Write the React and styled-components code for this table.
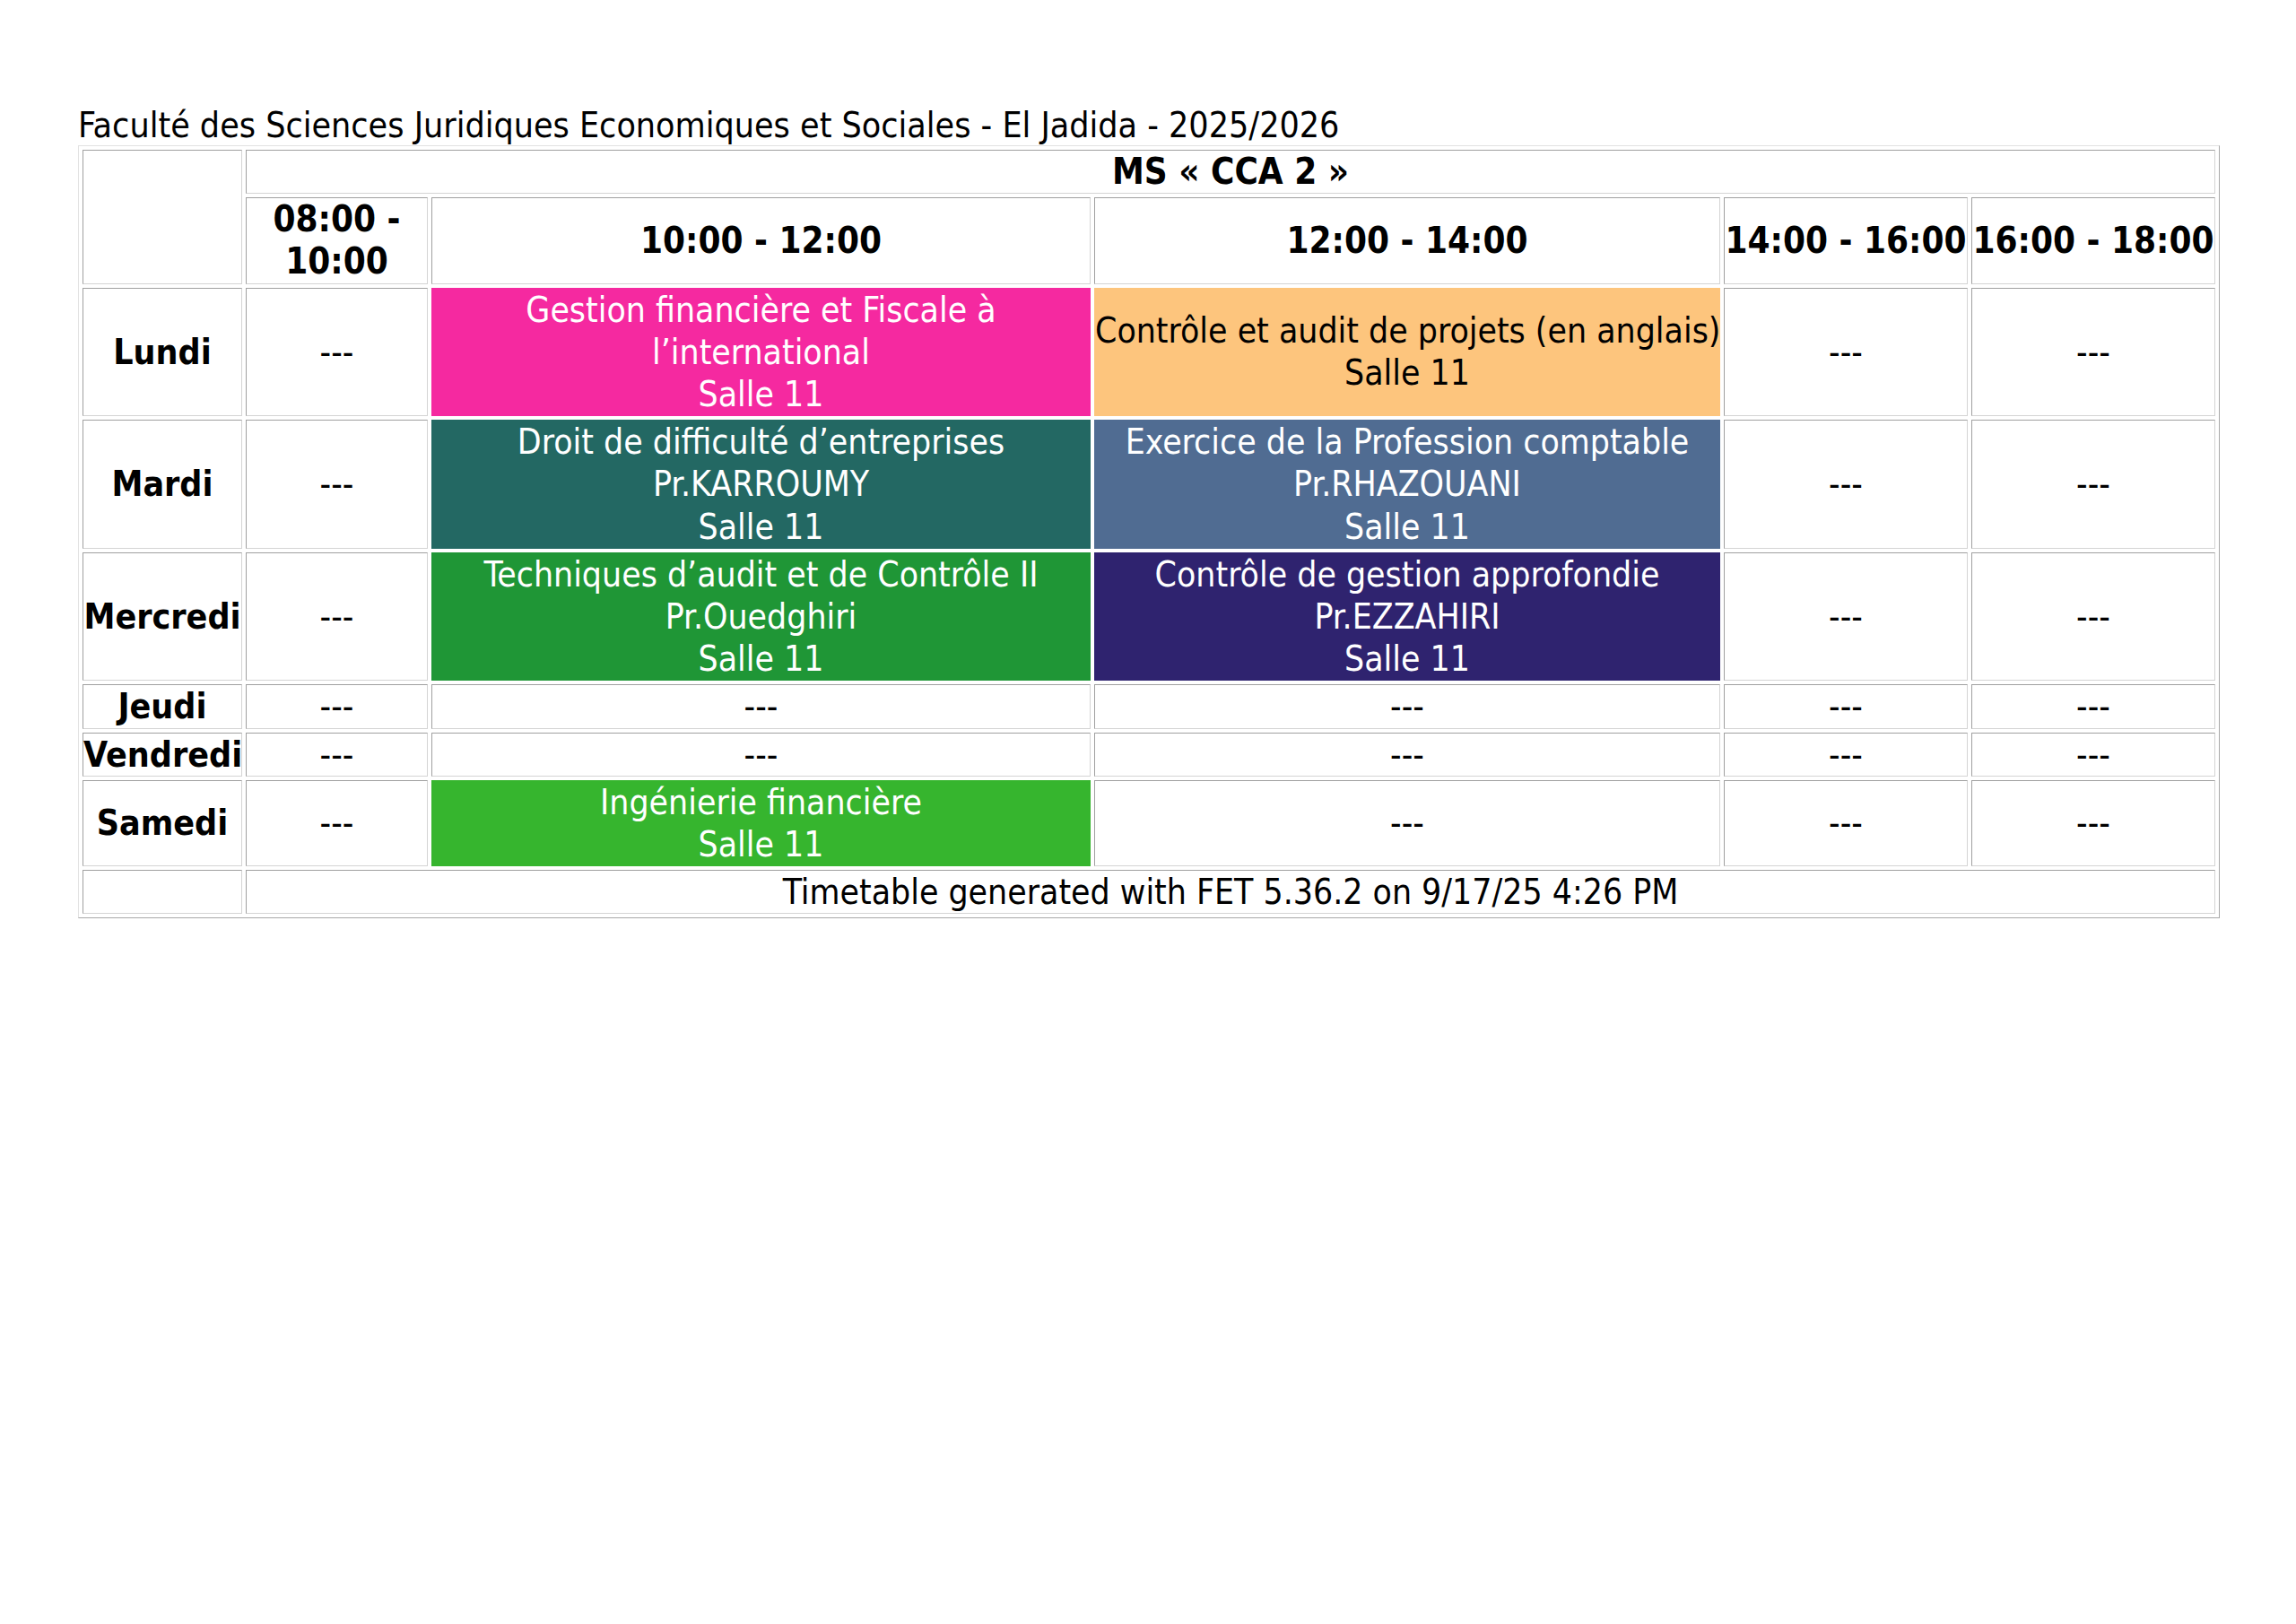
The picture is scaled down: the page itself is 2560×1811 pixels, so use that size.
import React from 'react';
import styled, { createGlobalStyle } from 'styled-components';

const GlobalStyle = createGlobalStyle`
  html, body {
    margin: 0;
    padding: 0;
    background: #ffffff;
  }
  body {
    font-family: "DejaVu Sans Condensed", "DejaVu Sans", sans-serif;
    font-stretch: condensed;
    color: #000;
  }
`;

const COLS = [178, 203, 735, 698, 272, 272];

const SALLE = 'Salle 11';

const days = [
  {
    name: 'Lundi',
    slots: [
      null,
      { bg: '#f529a0', fg: '#ffffff', lines: ['Gestion financière et Fiscale à l’international', SALLE] },
      { bg: '#fdc57d', fg: '#000000', lines: ['Contrôle et audit de projets (en anglais)', SALLE], nowrap: true },
      null,
      null,
    ],
  },
  {
    name: 'Mardi',
    slots: [
      null,
      { bg: '#236863', fg: '#ffffff', lines: ['Droit de difficulté d’entreprises', 'Pr.KARROUMY', SALLE] },
      { bg: '#506c92', fg: '#ffffff', lines: ['Exercice de la Profession comptable', 'Pr.RHAZOUANI', SALLE] },
      null,
      null,
    ],
  },
  {
    name: 'Mercredi',
    slots: [
      null,
      { bg: '#1f9636', fg: '#ffffff', lines: ['Techniques d’audit et de Contrôle II', 'Pr.Ouedghiri', SALLE] },
      { bg: '#2f236f', fg: '#ffffff', lines: ['Contrôle de gestion approfondie', 'Pr.EZZAHIRI', SALLE] },
      null,
      null,
    ],
  },
  { name: 'Jeudi', slots: [null, null, null, null, null] },
  { name: 'Vendredi', slots: [null, null, null, null, null] },
  {
    name: 'Samedi',
    slots: [
      null,
      { bg: '#36b52e', fg: '#ffffff', lines: ['Ingénierie financière', SALLE] },
      null,
      null,
      null,
    ],
  },
];

// the first slot wraps onto two lines, the narrow last two must not
const hours = [
  { label: '08:00 - 10:00', nowrap: false },
  { label: '10:00 - 12:00', nowrap: true },
  { label: '12:00 - 14:00', nowrap: true },
  { label: '14:00 - 16:00', nowrap: true },
  { label: '16:00 - 18:00', nowrap: true },
];

const Page = styled.main`
  padding: 118px 0 0 87px;
  min-height: 1811px;
  box-sizing: border-box;
`;

const Timetable = styled.table`
  width: 2388px;
  table-layout: fixed;
  border-collapse: separate;
  border-spacing: 4px;
  border: 1px solid;
  border-color: #e2e2e2 #a8a8a8 #a8a8a8 #e2e2e2;
  font-size: 38.8px;
  line-height: 47.2px;
`;

const Caption = styled.caption`
  caption-side: top;
  text-align: left;
  font-size: 39px;
  line-height: 44px;
  font-weight: normal;
  white-space: nowrap;
`;

const Col = styled.col`
  width: ${p => p.$w}px;
`;

const Cell = styled.td`
  padding: 0;
  text-align: center;
  vertical-align: middle;
  border: 1px solid;
  border-color: #a0a0a0 #d4d4d4 #d4d4d4 #a0a0a0;
  font-weight: normal;
  white-space: ${p => (p.$nowrap ? 'nowrap' : 'normal')};
  overflow: visible;
`;

const HeadCell = styled(Cell).attrs({ as: 'th' })`
  font-weight: bold;
  font-size: ${p => (p.$big ? '40px' : '39px')};
`;

const Activity = styled(Cell)`
  background: ${p => p.$bg};
  color: ${p => p.$fg};
  border-color: ${p => p.$bg};
`;

const Slot = ({ slot }) => {
  if (!slot) return <Cell>---</Cell>;
  return (
    <Activity $bg={slot.bg} $fg={slot.fg} $nowrap={slot.nowrap}>
      {slot.lines.map((line, i) => (
        <React.Fragment key={i}>
          {i > 0 && <br />}
          {line}
        </React.Fragment>
      ))}
    </Activity>
  );
};

const App = () => (
  <>
    <GlobalStyle />
    <Page>
      <Timetable>
        <Caption>Faculté des Sciences Juridiques Economiques et Sociales - El Jadida - 2025/2026</Caption>
        <colgroup>
          {COLS.map((w, i) => (
            <Col key={i} $w={w} />
          ))}
        </colgroup>
        <thead>
          <tr>
            <Cell rowSpan={2} />
            <HeadCell colSpan={5} $big>MS « CCA 2 »</HeadCell>
          </tr>
          <tr>
            {hours.map(h => (
              <HeadCell key={h.label} $big $nowrap={h.nowrap}>{h.label}</HeadCell>
            ))}
          </tr>
        </thead>
        <tbody>
          {days.map(day => (
            <tr key={day.name}>
              <HeadCell $nowrap>{day.name}</HeadCell>
              {day.slots.map((slot, i) => (
                <Slot key={i} slot={slot} />
              ))}
            </tr>
          ))}
          <tr>
            <Cell />
            <Cell colSpan={5}>Timetable generated with FET 5.36.2 on 9/17/25 4:26 PM</Cell>
          </tr>
        </tbody>
      </Timetable>
    </Page>
  </>
);

export default App;
